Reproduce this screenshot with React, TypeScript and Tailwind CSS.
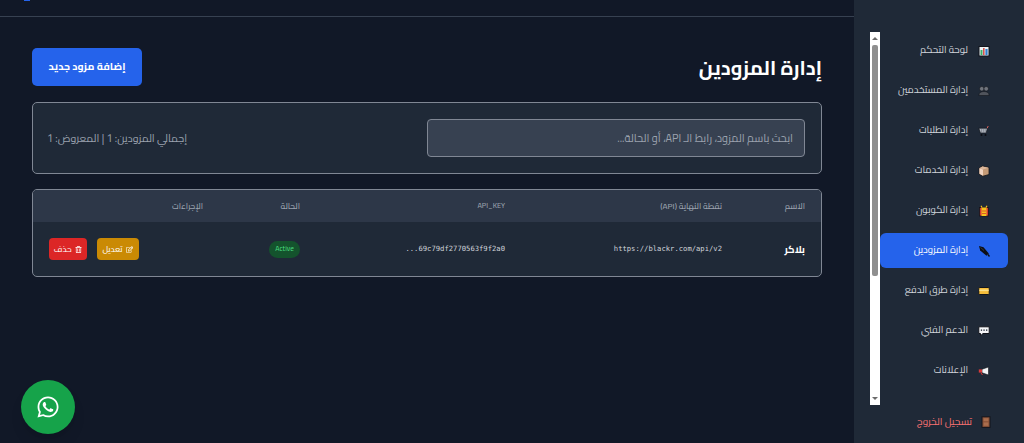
import type { ReactNode } from "react";
import { FaWhatsapp, FaRegEdit, FaRegTrashAlt } from "react-icons/fa";

const OUTLINE = "#12151c";

// small emoji-style icons with the heavy dark outline seen in the picture
function Glyph({ children }: { children: ReactNode }) {
  return (
    <svg width="12" height="12" viewBox="0 0 12 12" className="shrink-0">
      {children}
    </svg>
  );
}

const icons: Record<string, ReactNode> = {
  chart: (
    <Glyph>
      <rect x="1" y="1.5" width="10" height="9.5" fill="#eaf3f5" stroke={OUTLINE} />
      <rect x="2.5" y="5" width="2" height="5" fill="#3fae6a" />
      <rect x="5" y="3" width="1.6" height="7" fill="#d9534f" />
      <rect x="7.4" y="4" width="2.2" height="6" fill="#2f80d0" />
    </Glyph>
  ),
  users: (
    <Glyph>
      <circle cx="3.8" cy="3.8" r="2.3" fill="#70747c" stroke={OUTLINE} strokeWidth="0.6" />
      <circle cx="8.2" cy="3.8" r="2.3" fill="#70747c" stroke={OUTLINE} strokeWidth="0.6" />
      <path d="M0.8 10.5 C1 7.5 3 6.5 6 6.5 C9 6.5 11 7.5 11.2 10.5 Z" fill="#50545c" stroke={OUTLINE} strokeWidth="0.6" />
    </Glyph>
  ),
  cart: (
    <Glyph>
      <path d="M0.8 3.2 H9.4 L8.2 8 H2.4 Z" fill="#b4bac3" stroke={OUTLINE} strokeWidth="0.7" />
      <path d="M3.4 3.5 V7.8 M5.3 3.5 V7.8 M7.2 3.5 V7.8" stroke="#5b616b" strokeWidth="0.5" />
      <path d="M9.2 3.2 L10.2 1" stroke="#d2605a" strokeWidth="1" fill="none" />
      <circle cx="3.5" cy="10" r="1" fill="#0b0d12" />
      <circle cx="7.5" cy="10" r="1" fill="#0b0d12" />
    </Glyph>
  ),
  box: (
    <Glyph>
      <path d="M1 3 L4.5 1 L11 2.5 V9.5 L5 11.2 L1 9 Z" fill="#c49a76" stroke={OUTLINE} strokeWidth="0.8" />
      <path d="M1.4 3.2 L5 4.4 V10.7 L1.4 8.8 Z" fill="#f0d3c0" />
      <path d="M1.4 3.2 L4.5 1.4 L10.6 2.8 L5 4.4 Z" fill="#dcb79b" />
    </Glyph>
  ),
  gift: (
    <Glyph>
      <rect x="1.5" y="2.5" width="9" height="8.5" fill="#d63c32" stroke={OUTLINE} strokeWidth="0.8" />
      <rect x="3.5" y="2.5" width="5" height="8.5" fill="#f6c21c" />
      <path d="M4 2.5 L3 0.8 M8 2.5 L9 0.8" stroke="#f6c21c" strokeWidth="1.2" />
      <path d="M4 6 H8 M4 8.5 H8" stroke="#d63c32" strokeWidth="0.8" />
    </Glyph>
  ),
  pen: (
    <Glyph>
      <path d="M1 1 L5.5 2.2 L10.8 8.5 L8.5 10.8 L2.2 5.5 Z" fill="#0d0f14" />
      <path d="M10 9.5 L11.5 11.5" stroke="#0d0f14" strokeWidth="1.4" />
      <path d="M2.5 2.5 L6 5.5" stroke="#4a4d55" strokeWidth="0.6" />
    </Glyph>
  ),
  card: (
    <Glyph>
      <rect x="0.8" y="2.5" width="10.4" height="7" rx="0.8" fill="#f5bd3a" stroke={OUTLINE} />
      <rect x="1.3" y="4.5" width="9.4" height="1.6" fill="#fbe08a" />
    </Glyph>
  ),
  speech: (
    <Glyph>
      <path d="M0.8 1.8 H11.2 V8.5 H5 L2.5 10.8 V8.5 H0.8 Z" fill="#f5f6f8" stroke={OUTLINE} />
      <rect x="2.8" y="4.4" width="1.3" height="1.5" fill="#333a46" />
      <rect x="5.4" y="4.4" width="1.3" height="1.5" fill="#333a46" />
      <rect x="8" y="4.4" width="1.3" height="1.5" fill="#333a46" />
    </Glyph>
  ),
  megaphone: (
    <Glyph>
      <path d="M10.5 2 V10 L4 7.8 V4.2 Z" fill="#f2f3f5" stroke={OUTLINE} strokeWidth="0.6" />
      <path d="M0.8 4.4 H4 V7.6 H0.8 Z" fill="#d93a3a" />
      <path d="M3 8 L4.5 10" stroke="#d93a3a" strokeWidth="1" />
    </Glyph>
  ),
  door: (
    <Glyph>
      <rect x="2" y="0.8" width="8" height="10.6" fill="#8a5238" stroke={OUTLINE} />
      <rect x="3.6" y="2.2" width="4.8" height="3" fill="#a96d4d" />
      <rect x="3.6" y="6.4" width="4.8" height="3.4" fill="#a96d4d" />
    </Glyph>
  ),
};

const navItems = [
  { label: "لوحة التحكم", icon: "chart" },
  { label: "إدارة المستخدمين", icon: "users" },
  { label: "إدارة الطلبات", icon: "cart" },
  { label: "إدارة الخدمات", icon: "box" },
  { label: "إدارة الكوبون", icon: "gift" },
  { label: "إدارة المزودين", icon: "pen", active: true },
  { label: "إدارة طرق الدفع", icon: "card" },
  { label: "الدعم الفني", icon: "speech" },
  { label: "الإعلانات", icon: "megaphone" },
];

function FakeScrollbar() {
  return (
    <div className="flex w-[10px] shrink-0 flex-col items-center bg-white">
      <svg width="6" height="13" viewBox="0 0 6 13" className="shrink-0 text-[#6b6b6b]">
        <path d="M3 5 L6 8 H0 Z" fill="currentColor" />
      </svg>
      <div className="h-[231px] w-[6px] rounded-[2px] bg-[#8f8f8f]" />
      <div className="flex-1" />
      <svg width="6" height="13" viewBox="0 0 6 13" className="shrink-0 text-[#6b6b6b]">
        <path d="M3 8 L6 5 H0 Z" fill="currentColor" />
      </svg>
    </div>
  );
}

export default function App() {
  return (
    <div dir="rtl" className="flex h-[443px] w-[1024px] overflow-hidden bg-[#111827] font-['Cairo',sans-serif]">
      {/* Sidebar */}
      <aside className="flex w-[170px] shrink-0 flex-col bg-[#1f2937] px-4 pt-8">
        <nav className="flex h-[373px] shrink-0 overflow-hidden">
          <ul className="flex flex-1 flex-col gap-[5px] pt-px">
            {navItems.map((item) => (
              <li
                key={item.label}
                className={`flex h-[35px] shrink-0 items-center gap-[10px] rounded-[6px] pr-[18px] text-[9.7px] ${
                  item.active ? "bg-[#2563eb] text-white" : "text-[#d1d5db]"
                }`}
              >
                {icons[item.icon]}
                <span>{item.label}</span>
              </li>
            ))}
          </ul>
          <FakeScrollbar />
        </nav>
        <div className="mt-[9px] flex items-center gap-[8px] pr-[16px] text-[10px] text-[#f87171]">
          {icons.door}
          <span>تسجيل الخروج</span>
        </div>
      </aside>

      {/* Main */}
      <main className="relative flex-1">
        <div className="flex h-[17px] justify-end border-b border-[#374151]">
          <div className="ml-[24px] h-px w-[6px] bg-[#2563eb]" />
        </div>
        <div className="px-8 pt-[31px]">
          <div className="flex items-center justify-between">
            <h1 className="pt-px text-[20px] font-bold text-white">إدارة المزودين</h1>
            <button className="h-[38px] w-[110px] rounded-[5px] bg-[#2563eb] text-[10.5px] font-bold text-white">
              إضافة مزود جديد
            </button>
          </div>

          {/* Search */}
          <div className="mt-4 flex h-[72px] items-center justify-between rounded-[5px] border border-[#808794] bg-[#1f2937] pr-4 pl-[14px]">
            <input
              readOnly
              placeholder="ابحث باسم المزود، رابط الـ API، أو الحالة..."
              className="h-[38px] w-[378px] rounded-[4px] border border-[#808794] bg-[#374151] px-[11px] pb-px text-[10.9px] text-white placeholder:text-[#9ca3af]"
            />
            <p className="text-[10.7px] text-[#9ca3af]">إجمالي المزودين: 1 | المعروض: 1</p>
          </div>

          {/* Table */}
          <div className="mt-[15px] overflow-hidden rounded-[5px] border border-[#808794] bg-[#1f2937]">
            <table className="w-full table-fixed border-collapse text-right">
              <thead className="bg-[#2d3748] text-[8.4px] text-[#9ca3af]">
                <tr className="h-8">
                  <th className="w-[83px] px-4 font-medium">الاسم</th>
                  <th className="w-[217px] px-4 font-medium">نقطة النهاية (API)</th>
                  <th className="w-[205px] px-4 text-[7.4px] font-medium">API_KEY</th>
                  <th className="w-[97px] px-4 font-medium">الحالة</th>
                  <th className="px-4 font-medium">الإجراءات</th>
                </tr>
              </thead>
              <tbody>
                <tr className="h-[54px]">
                  <td className="px-4 text-[10px] font-bold text-white">بلاكر</td>
                  <td className="px-4 text-right font-['DejaVu_Sans_Mono',monospace] text-[7.2px] text-[#d1d5db] [direction:ltr]">
                    https://blackr.com/api/v2
                  </td>
                  <td className="px-4 text-right font-['DejaVu_Sans_Mono',monospace] text-[7.2px] text-[#d1d5db] [direction:ltr]">
                    ...69c79df2770563f9f2a0
                  </td>
                  <td className="px-4">
                    <span className="flex h-[17px] w-[31px] items-center justify-center rounded-full bg-[#14532d] text-[7.2px] text-[#4ade80]">Active</span>
                  </td>
                  <td className="px-4">
                    <div className="flex justify-end gap-[10px]">
                      <button className="flex h-[22px] w-[42px] items-center justify-center gap-[3px] rounded bg-[#ca8a04] text-[8.4px] text-white">
                        <FaRegEdit className="size-[7px]" />
                        تعديل
                      </button>
                      <button className="flex h-[22px] w-[37.5px] items-center justify-center gap-[3px] rounded bg-[#dc2626] text-[8.4px] text-white">
                        <FaRegTrashAlt className="size-[7px]" />
                        حذف
                      </button>
                    </div>
                  </td>
                </tr>
              </tbody>
            </table>
          </div>
        </div>

        {/* WhatsApp */}
        <button className="absolute bottom-[9px] left-[21px] flex size-[54px] items-center justify-center rounded-full bg-[#16a34a] text-white shadow-lg">
          <FaWhatsapp className="size-[24px]" />
        </button>
      </main>
    </div>
  );
}
